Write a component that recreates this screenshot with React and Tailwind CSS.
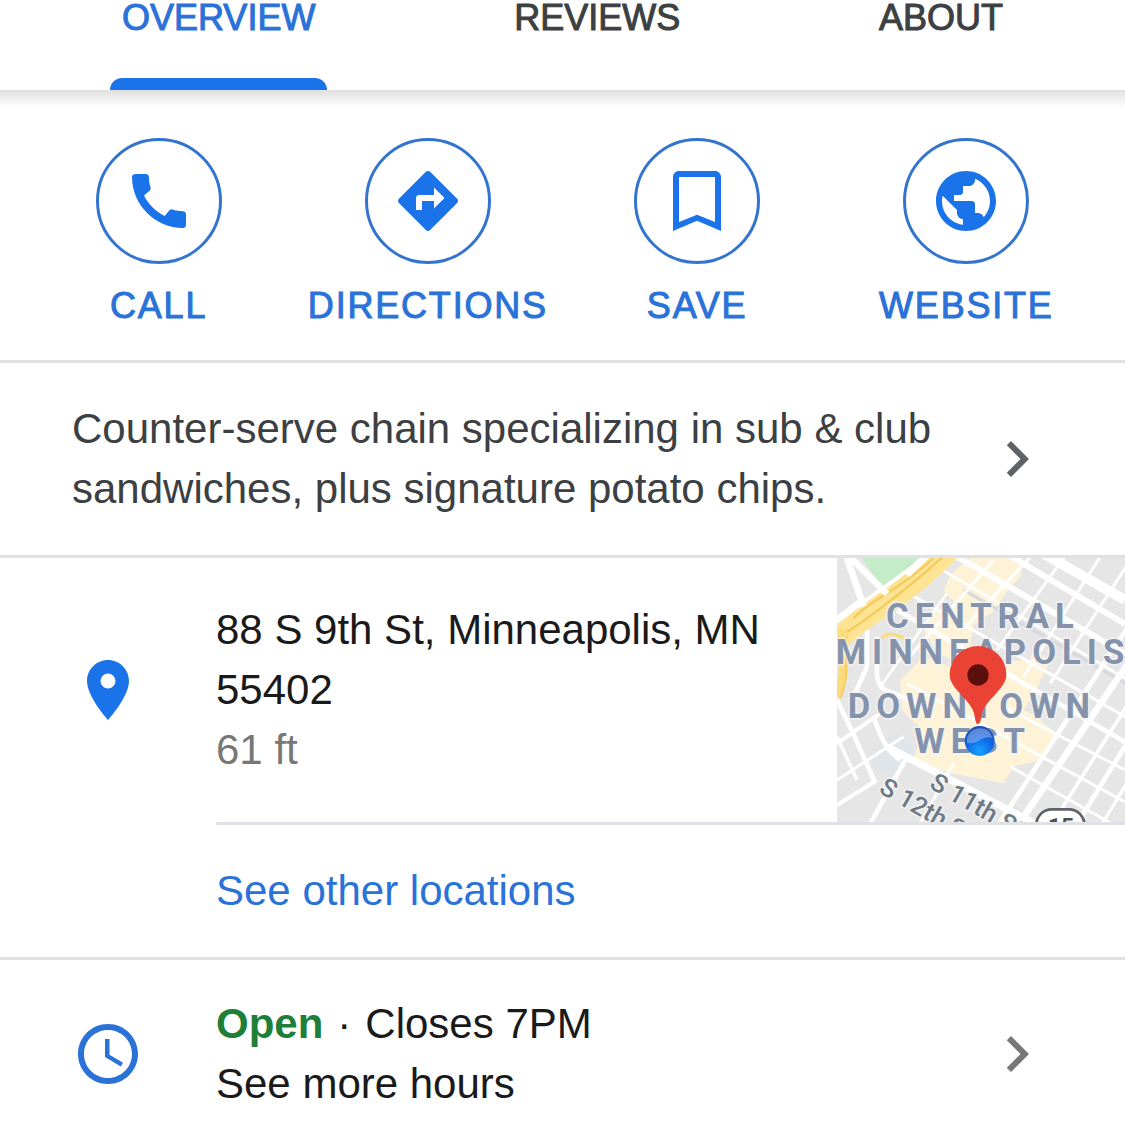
import { MdCall, MdPublic, MdPlace, MdAccessTime, MdChevronRight } from "react-icons/md";
import { useState } from "react";

function DirectionsIcon({ className }) {
  return (
    <svg viewBox="0 0 24 24" fill="currentColor" className={className} aria-hidden="true">
      <path d="M21.71 11.29l-9-9c-.39-.39-1.02-.39-1.41 0l-9 9c-.39.39-.39 1.02 0 1.41l9 9c.39.39 1.02.39 1.41 0l9-9c.39-.38.39-1.01 0-1.41zM14 14.5V12h-4v3H8v-4c0-.55.45-1 1-1h5V7.5l3.5 3.5-3.5 3.5z" />
    </svg>
  );
}

function BookmarkIcon({ className }) {
  return (
    <svg viewBox="0 0 24 24" fill="currentColor" fillRule="evenodd" className={className} aria-hidden="true">
      <path d="M6 2h12c1.1 0 2 .9 2 2v18l-8-3.4L4 22V4c0-1.1.9-2 2-2zm0 2v15l6-2.4 6 2.4V4H6z" />
    </svg>
  );
}

const tabs = ["OVERVIEW", "REVIEWS", "ABOUT"];

const actions = [
  { label: "CALL", Icon: MdCall },
  { label: "DIRECTIONS", Icon: DirectionsIcon },
  { label: "SAVE", Icon: BookmarkIcon },
  { label: "WEBSITE", Icon: MdPublic },
];

// [x1, y1, x2, y2, width]
const streets = [
  // north-west to south-east
  [600, 0, 864, 150, 30],
  [350, 14, 864, 312, 18],
  [490, 0, 864, 222, 18],
  [300, 50, 864, 385, 8],
  [215, 130, 864, 500, 9],
  [180, 180, 864, 576, 14],
  [210, 400, 864, 756, 9],
  [500, 470, 864, 660, 9],
  [150, 590, 610, 830, 22],
  [520, 650, 840, 830, 9],
  [0, 560, 60, 690, 10],
  // north-east to south-west
  [600, 0, 380, 235, 10],
  [690, 10, 480, 300, 9],
  [790, 20, 560, 380, 9],
  [880, 30, 640, 400, 9],
  [900, 190, 480, 830, 14],
  [900, 300, 540, 830, 20],
  [900, 420, 640, 830, 11],
  [900, 530, 715, 830, 14],
  [900, 650, 790, 830, 10],
  [470, 30, 200, 340, 10],
  [330, 130, 130, 410, 8],
  [350, 640, 250, 820, 9],
  [210, 620, 95, 830, 14],
  [0, 580, 130, 490, 12],
  [0, 690, 200, 560, 9],
  [0, 765, 120, 690, 12],
  [0, 215, 300, 0, 14],
];

function MiniMap() {
  return (
    <svg viewBox="0 24 864 792" preserveAspectRatio="xMidYMid slice" className="block h-full w-full" role="img" aria-label="Map of Downtown West">
      <rect y="24" width="864" height="792" fill="#e6e6e6" />

      {/* commercial areas */}
      <g fill="#fef3d6">
        <path d="M400 24h140l15 50-45 50-40 60-60 40-10 60 70 30-40 50-120-50-50-70 30-60 70-20-40-40 20-50z" />
        <path d="M190 390l70-70 80 30 220-20 60 30-20 60-40 60 40 20 55 50-45 80-80 20-30 50-50-10-110-20-110-40 25-90-60-60z" />
        <path d="M590 300l50 30-25 50-45-25z" />
      </g>
      <path d="M100 610l60-60 60 10 10 50-60 70-60-20z" fill="#dfe5e9" />
      <path d="M75 24h165l-90 110z" fill="#c5ecc8" />
      <path d="M380 120l520 300" stroke="#d8d9de" strokeWidth="10" />

      <g stroke="#fff" fill="none">
        {streets.map(([x1, y1, x2, y2, w], i) => (
          <line key={i} x1={x1} y1={y1} x2={x2} y2={y2} strokeWidth={w} />
        ))}
        <path d="M90 240v110l-40 90M120 260v110q0 50 50 60l90 40M0 450q60 120 110 240M110 500q30 100 80 130" strokeWidth="14" />
      </g>

      {/* highway */}
      <g fill="none">
        <path d="M335 0Q250 90 130 170T0 275" stroke="#fde493" strokeWidth="70" />
        <path d="M335 5Q230 100 130 175T5 260M290 24Q230 80 150 130T50 205" stroke="#f5c95c" strokeWidth="7" />
        <path d="M18 240v120q0 40-18 80" stroke="#fbdc7c" strokeWidth="26" />
        <path d="M28 260v100q0 40-18 85" stroke="#f5c95c" strokeWidth="5" />
        <path d="M135 264q20-22 65 0" stroke="#fbdc7c" strokeWidth="10" />
        <path d="M210 75l66-65M150 132l-110-110M30 24l50 145M0 210l85-65" stroke="#fff" strokeWidth="20" />
      </g>

      {/* labels */}
      <g fontFamily="Roboto, sans-serif" paintOrder="stroke" stroke="#f5f5f5" strokeWidth="10" strokeOpacity="0.7" strokeLinejoin="round">
        <g fill="#8493ab" fontSize="104" fontWeight="700" letterSpacing="18">
          <text x="147" y="233">CENTRAL</text>
          <text x="-4" y="341">MINNEAPOLIS</text>
          <text x="32" y="503">DOWNTOWN</text>
          <text x="232" y="610">WEST</text>
        </g>
        <g fill="#6d7885" fontSize="76" fontWeight="500">
          <text transform="translate(274 712) rotate(30)">S 11th St</text>
          <text transform="translate(122 726) rotate(30)">S 12th St</text>
        </g>
      </g>
      <rect x="598" y="778" width="144" height="100" rx="46" fill="#fff" stroke="#5f6368" strokeWidth="8" />
      <text x="672" y="852" textAnchor="middle" fontFamily="Roboto, sans-serif" fontSize="68" fontWeight="700" fill="#4d5156">15</text>

      {/* place marker */}
      <path d="M423 522c-7 0-8-10-10-24-5-30-26-46-46-70-18-20-29-34-29-55a85 85 0 0 1 170 0c0 21-11 35-29 55-20 24-41 40-46 70-2 14-3 24-10 24z" fill="#ea4335" />
      <circle cx="423" cy="375" r="32" fill="#5c100e" />

      {/* current position */}
      <defs>
        <radialGradient id="dot" cx="50%" cy="85%" r="80%">
          <stop offset="0" stopColor="#12a5fb" />
          <stop offset="0.55" stopColor="#1268e8" />
          <stop offset="1" stopColor="#1c50b8" />
        </radialGradient>
      </defs>
      <circle cx="428" cy="573" r="45" fill="url(#dot)" />
      <path d="M390 578q-2-38 38-43 30 0 38 28-20-5-38 8t-38 7z" fill="#fff" opacity="0.3" />
    </svg>
  );
}

export default function App() {
  const [activeTab, setActiveTab] = useState("OVERVIEW");

  return (
    <div className="min-h-screen bg-white font-['Liberation_Sans',Arial,sans-serif] text-[42px] leading-[60px] text-[#1a1a1a]">

      {/* ===== TABS ===== */}
      <nav className="flex justify-between px-[110px]">
        {tabs.map((tab) => (
          <button
            key={tab}
            onClick={() => setActiveTab(tab)}
            className={`flex h-[90px] flex-col justify-between text-4xl leading-9 [-webkit-text-stroke:1px] ${activeTab === tab ? "text-[#2a72d8]" : "text-[#3c4043]"}`}
          >
            <span className="px-3">{tab}</span>
            {activeTab === tab && <span className="h-3 w-full rounded-t-xl bg-[#1a73e8]" />}
          </button>
        ))}
      </nav>

      {/* ===== ACTIONS ===== */}
      <section className="border-b-3 border-[#dfe1e5] bg-linear-to-b from-[#e0e0e0] to-white bg-[length:100%_18px] bg-no-repeat px-6 pt-12 pb-9">
        <div className="grid grid-cols-4">
          {actions.map(({ label, Icon }) => (
            <button key={label} className="flex flex-col items-center gap-6 text-[#2a72d8]">
              <span className="flex size-[126px] items-center justify-center rounded-full border-3 border-[#3274d0]">
                <Icon className="size-[72px] text-[#1a73e8]" />
              </span>
              <span className="text-4xl leading-9 tracking-wider [-webkit-text-stroke:1px]">{label}</span>
            </button>
          ))}
        </div>
      </section>

      {/* ===== DESCRIPTION ===== */}
      <button className="flex w-full items-center justify-between border-b-3 border-[#dfe1e5] px-[72px] py-9 text-left text-[#3c4043]">
        <span className="max-w-[880px]">Counter-serve chain specializing in sub &amp; club sandwiches, plus signature potato chips.</span>
        <MdChevronRight className="size-[72px] shrink-0 text-[#5f6368]" />
      </button>

      {/* ===== ADDRESS ===== */}
      <section className="border-b-3 border-[#dfe1e5]">
        <div className="flex">
          <div className="flex w-[216px] shrink-0 items-center pl-[72px]">
            <MdPlace className="size-[72px] text-[#1a73e8]" />
          </div>
          <address className="flex-1 py-[42px] not-italic">
            <p className="max-w-[580px]">88 S 9th St, Minneapolis, MN 55402</p>
            <p className="text-[#777777]">61 ft</p>
          </address>
          <div className="h-[264px] w-[288px] shrink-0">
            <MiniMap />
          </div>
        </div>
        <div className="ml-[216px] border-t-3 border-[#dfe1e5] py-9">
          <a href="#locations" className="block text-[#2a72d8]">See other locations</a>
        </div>
      </section>

      {/* ===== HOURS ===== */}
      <button className="flex w-full items-center pt-[34px] pr-[72px] pb-[10px] text-left">
        <span className="flex w-[216px] shrink-0 items-center pl-[72px]">
          <MdAccessTime className="size-[72px] text-[#2a72d8]" />
        </span>
        <span className="flex-1">
          <span className="flex gap-[14px]">
            <b className="text-[#1e8038]">Open</b>
            <span>·</span>
            <span>Closes 7PM</span>
          </span>
          <span className="block">See more hours</span>
        </span>
        <MdChevronRight className="size-[72px] shrink-0 text-[#777777]" />
      </button>
    </div>
  );
}
